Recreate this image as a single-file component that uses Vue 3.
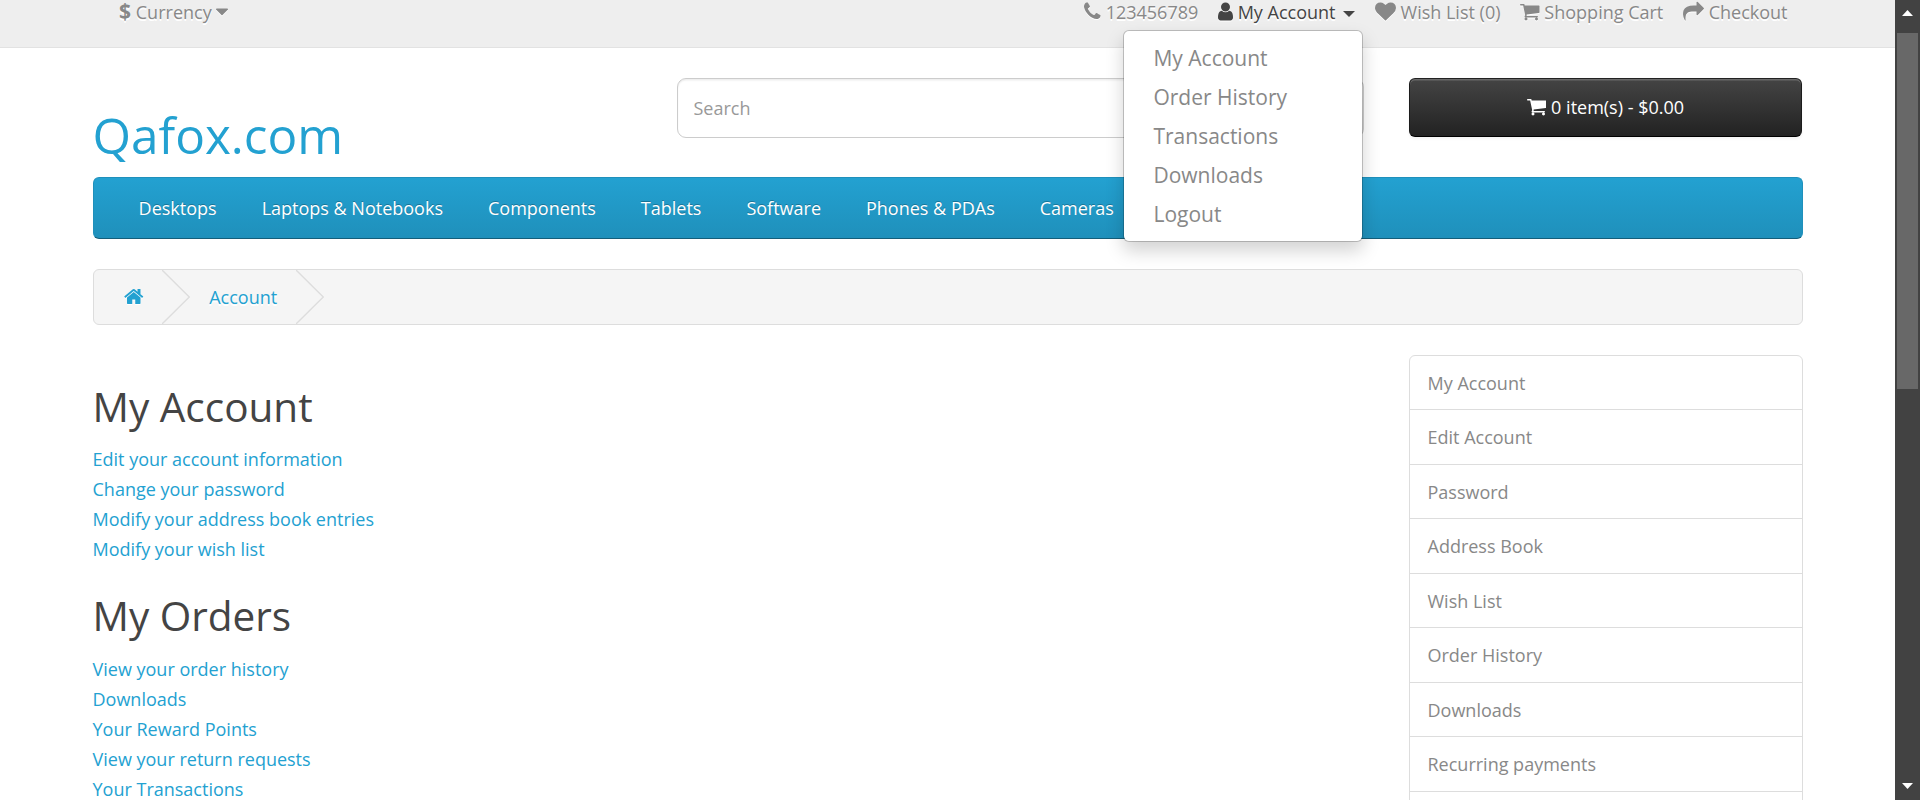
<script setup>
import { h } from 'vue'

const glyphs = {
  phone: [1408, 'M1600 1240q0 27-10 70.5t-21 68.5q-21 50-122 106-94 51-186 51-27 0-52.5-3.5t-57.5-12.5-47.5-14.5-55.5-20.5-49-18q-98-35-175-83-128-79-264.5-215.5t-215.5-264.5q-48-77-83-175-3-9-18-49t-20.5-55.5-14.5-47.5-12.5-57.5-3.5-52.5q0-92 51-186 56-101 106-122 25-11 68.5-21t70.5-10q14 0 21 3 18 6 53 76 11 19 30 54t35 63.5 31 53.5q3 4 17.5 25t21.5 35.5 7 28.5q0 20-28.5 50t-62 55-62 53-28.5 46q0 9 5 22.5t8.5 20.5 14 24 11.5 19q76 137 174 235t235 174q2 1 19 11.5t24 14 20.5 8.5 22.5 5q18 0 46-28.5t53-62 55-62 50-28.5q14 0 28.5 7t35.5 21.5 25 17.5q25 15 53.5 31t63.5 35 54 30q70 35 76 53 3 7 3 21z'],
  user: [1280, 'M1536 1399q0 109-62.5 187t-150.5 78h-854q-88 0-150.5-78t-62.5-187q0-85 8.5-160.5t31.5-152 58.5-131 94-89 134.5-34.5q131 128 313 128t313-128q76 0 134.5 34.5t94 89 58.5 131 31.5 152 8.5 160.5zm-256-887q0 159-112.5 271.5t-271.5 112.5-271.5-112.5-112.5-271.5 112.5-271.5 271.5-112.5 271.5 112.5 112.5 271.5z'],
  heart: [1792, 'M896 1664q-26 0-44-18l-624-602q-10-8-27.5-26t-55.5-65.5-68-97.5-53.5-121-23.5-138q0-220 127-344t351-124q62 0 126.5 21.5t120 58 95.5 68.5 76 68q36-36 76-68t95.5-68.5 120-58 126.5-21.5q224 0 351 124t127 344q0 221-229 450l-623 600q-18 18-44 18z'],
  cart: [1664, 'M704 1536q0 52-38 90t-90 38-90-38-38-90 38-90 90-38 90 38 38 90zm896 0q0 52-38 90t-90 38-90-38-38-90 38-90 90-38 90 38 38 90zm128-1088v512q0 24-16.5 42.5t-40.5 21.5l-1044 122q13 60 13 70 0 16-24 64h920q26 0 45 19t19 45-19 45-45 19h-1024q-26 0-45-19t-19-45q0-11 8-31.5t16-36 21.5-40 15.5-29.5l-177-823h-204q-26 0-45-19t-19-45 19-45 45-19h256q16 0 28.5 6.5t19.5 15.5 13 24.5 8 26 5.5 29.5 4.5 26h1201q26 0 45 19t19 45z'],
  share: [1792, 'M1792 640q0 26-19 45l-512 512q-19 19-45 19t-45-19-19-45v-256h-224q-98 0-175.5 6t-154 21.5-133 42.5-105.5 69.5-80 101-48.5 138.5-17.5 181q0 55 5 123 0 6 2.5 23.5t2.5 26.5q0 15-8.5 25t-23.5 10q-16 0-28-17-7-9-13-22t-13.5-30-10.5-24q-127-285-127-451 0-199 53-333 162-403 875-403h224v-256q0-26 19-45t45-19 45 19l512 512q19 19 19 45z'],
  home: [1664, 'M1472 992v480q0 26-19 45t-45 19h-384v-384h-256v384h-384q-26 0-45-19t-19-45v-480q0-1 .5-3t.5-3l575-474 575 474q1 2 1 6zm223-69l-62 74q-8 9-21 11h-3q-13 0-21-7l-692-577-692 577q-12 8-24 7-13-2-21-11l-62-74q-8-10-7-23.5t11-21.5l719-599q32-26 76-26t76 26l244 204v-195q0-14 9-23t23-9h192q14 0 23 9t9 23v408l219 182q10 8 11 21.5t-7 23.5z'],
  caret: [1024, 'M1408 704q0 26-19 45l-448 448q-19 19-45 19t-45-19l-448-448q-19-19-19-45t19-45 45-19h896q26 0 45 19t19 45z'],
}

const Icon = (props) => {
  const [advance, d] = glyphs[props.name]
  return h(
    'svg',
    {
      viewBox: `${(1792 - advance) / 2} 0 ${advance} 1792`,
      width: (advance * 21) / 1792,
      height: 21,
      fill: 'currentColor',
      'aria-hidden': 'true',
    },
    [h('path', { d })],
  )
}
Icon.props = ['name']

const accountMenu = ['My Account', 'Order History', 'Transactions', 'Downloads', 'Logout']
const categories = ['Desktops', 'Laptops & Notebooks', 'Components', 'Tablets', 'Software', 'Phones & PDAs', 'Cameras']
const sections = [
  {
    title: 'My Account',
    links: ['Edit your account information', 'Change your password', 'Modify your address book entries', 'Modify your wish list'],
  },
  {
    title: 'My Orders',
    links: ['View your order history', 'Downloads', 'Your Reward Points', 'View your return requests', 'Your Transactions'],
  },
]
const sidebar = ['My Account', 'Edit Account', 'Password', 'Address Book', 'Wish List', 'Order History', 'Downloads', 'Recurring payments']
</script>

<template>
  <div class="window">
    <div class="page">
      <nav class="top">
        <div class="container top-row">
          <a class="currency"><strong>$</strong> Currency <Icon class="icon" name="caret" /></a>
          <div class="top-links">
            <a><Icon class="icon" name="phone" /> 123456789</a>
            <div class="account">
              <a class="open"><Icon class="icon" name="user" /> My Account <span class="caret"></span></a>
              <ul class="menu">
                <li v-for="item in accountMenu" :key="item">{{ item }}</li>
              </ul>
            </div>
            <a><Icon class="icon" name="heart" /> Wish List (0)</a>
            <a><Icon class="icon" name="cart" /> Shopping Cart</a>
            <a><Icon class="icon" name="share" /> Checkout</a>
          </div>
        </div>
      </nav>

      <header class="container header">
        <h1 class="logo">Qafox.com</h1>
        <div class="search">
          <input class="search-input" type="text" placeholder="Search" />
          <button class="search-button" type="button" aria-label="Search"></button>
        </div>
        <button class="cart" type="button"><Icon class="icon" name="cart" /> 0 item(s) - $0.00</button>
      </header>

      <div class="container">
        <nav class="categories">
          <a v-for="c in categories" :key="c">{{ c }}</a>
        </nav>

        <div class="breadcrumb">
          <a class="home"><Icon class="icon" name="home" /></a>
          <svg class="chevron" width="28" height="54" viewBox="0 0 28 54"><path d="M0 0L27.3 27L0 54" /></svg>
          <a class="crumb">Account</a>
          <svg class="chevron" width="28" height="54" viewBox="0 0 28 54"><path d="M0 0L27.3 27L0 54" /></svg>
        </div>

        <div class="columns">
          <main class="content">
            <section v-for="s in sections" :key="s.title">
              <h2>{{ s.title }}</h2>
              <ul>
                <li v-for="l in s.links" :key="l"><a>{{ l }}</a></li>
              </ul>
            </section>
          </main>
          <aside class="sidebar">
            <a v-for="s in sidebar" :key="s">{{ s }}</a>
          </aside>
        </div>
      </div>
    </div>

    <div class="scrollbar">
      <svg width="11" height="6" viewBox="0 0 11 6"><path d="M5.5 0L11 6H0z" /></svg>
      <div class="thumb"></div>
      <svg class="down" width="11" height="6" viewBox="0 0 11 6"><path d="M0 0H11L5.5 6z" /></svg>
    </div>
  </div>
</template>

<style>
body {
  margin: 0;
  overflow: hidden;
}
</style>

<style scoped>
* {
  box-sizing: border-box;
}
.window {
  display: flex;
  width: 1920px;
  height: 800px;
  overflow: hidden;
  background: #fff;
  font: 400 18px/30px "Open Sans", "Noto Sans", sans-serif;
  color: #666;
}
ul {
  list-style: none;
  margin: 0;
  padding: 0;
}
.page {
  flex: 1;
  height: 800px;
  overflow: hidden;
}
.container {
  width: 1710px;
  margin: 0 auto;
}
.icon {
  vertical-align: -3px;
}

.top {
  height: 48px;
  background: #eee;
  border-bottom: 1px solid #e2e2e2;
}
.top-row {
  display: flex;
  justify-content: space-between;
  padding: 0 15px 0 26.6px;
  line-height: 24px;
  color: #888;
  white-space: nowrap;
  text-shadow: 0 1.5px 0 #fff;
}
.top .icon {
  filter: drop-shadow(0 1.5px 0 #fff);
}
.currency strong {
  font-size: 21px;
  line-height: 1;
}
.top-links {
  display: flex;
  gap: 19.7px;
}
.account {
  position: relative;
}
.open {
  color: #444;
}
.caret {
  display: inline-block;
  margin-left: 3px;
  vertical-align: middle;
  border-top: 6px solid #444;
  border-left: 6px solid transparent;
  border-right: 6px solid transparent;
}
.menu {
  position: absolute;
  z-index: 5;
  top: 30px;
  right: -7.5px;
  width: 240px;
  height: 212px;
  padding: 7.5px 0;
  background: #fff;
  background-clip: padding-box;
  border: 1px solid rgba(0, 0, 0, 0.2);
  border-radius: 6px;
  box-shadow: 0 9px 18px rgba(0, 0, 0, 0.175);
  font-size: 21px;
  line-height: 30px;
  text-shadow: none;
}
.menu li {
  padding: 4.2px 29.8px 4.8px;
}

.header {
  display: grid;
  grid-template-columns: 584px 687px 439px;
  height: 129px;
  padding-top: 30px;
}
.logo {
  margin: 30px 0 0;
  font-size: 49.5px;
  font-weight: 400;
  line-height: 54px;
  color: #23a1d1;
}
.search {
  display: flex;
  height: 60px;
}
.search-input {
  flex: 1;
  min-width: 0;
  padding: 0 16px;
  border: 1px solid #ccc;
  border-radius: 9px 0 0 9px;
  box-shadow: inset 0 1.5px 1.5px rgba(0, 0, 0, 0.075);
  font: inherit;
  color: #555;
}
.search-input::placeholder {
  color: #999;
}
.search-button {
  width: 68px;
  border: 1px solid #ccc;
  border-left: 0;
  border-radius: 0 9px 9px 0;
  background: linear-gradient(#fff, #e6e6e6);
}
.cart {
  width: 393px;
  height: 59px;
  margin-left: 45.5px;
  padding: 0 0 2px;
  border: 1px solid;
  border-color: #222 #1c1c1c #000;
  border-radius: 6px;
  background: linear-gradient(#444, #222);
  box-shadow: inset 0 1.5px 0 rgba(255, 255, 255, 0.2), 0 1.5px 3px rgba(0, 0, 0, 0.05);
  font: inherit;
  color: #fff;
}

.categories {
  display: flex;
  height: 62px;
  padding: 15px 22.6px;
  border: 1px solid;
  border-color: #1f90bb #1f90bb #145e7a;
  border-radius: 6px;
  background: linear-gradient(#23a1d1, #1f90bb);
  color: #fff;
  text-shadow: 0 -1.5px 0 rgba(0, 0, 0, 0.25);
}
.categories a {
  padding: 0 22.5px;
}

.breadcrumb {
  display: flex;
  height: 56px;
  margin: 30px 0;
  border: 1px solid #ddd;
  border-radius: 6px;
  background: #f5f5f5;
  line-height: 54px;
  color: #23a1d1;
  text-shadow: 0 1.5px 0 #fff;
}
.home {
  width: 68.5px;
  padding-left: 30.5px;
}
.home .icon {
  vertical-align: -2.5px;
  filter: drop-shadow(0 1.5px 0 #fff);
}
.chevron {
  flex: none;
  fill: none;
  stroke: #ddd;
  stroke-width: 1.4;
}
.crumb {
  padding: 0 18.5px 0 19.2px;
}

.columns {
  display: flex;
  justify-content: space-between;
}
.content {
  margin-top: -0.5px;
}
.content h2 {
  margin: 30px 0 15px;
  font-size: 40.5px;
  font-weight: 400;
  line-height: 44.5px;
  color: #444;
}
.content a {
  color: #23a1d1;
}
.sidebar {
  width: 394px;
  height: 460px;
  border: 1px solid #ddd;
  border-radius: 6px 6px 0 0;
}
.sidebar a {
  display: block;
  height: 54.5px;
  padding: 12px 18px 0;
  border-bottom: 1px solid #ddd;
  color: #888;
}
.sidebar a:first-child {
  height: 54px;
}

.scrollbar {
  display: flex;
  flex-direction: column;
  align-items: center;
  width: 25px;
  height: 800px;
  padding: 10px 0 11px;
  background: #424242;
}
.scrollbar svg {
  flex: none;
  fill: #fff;
}
.thumb {
  width: 21px;
  height: 356px;
  margin-top: 17px;
  background: #686868;
}
.down {
  margin-top: auto;
}
</style>
